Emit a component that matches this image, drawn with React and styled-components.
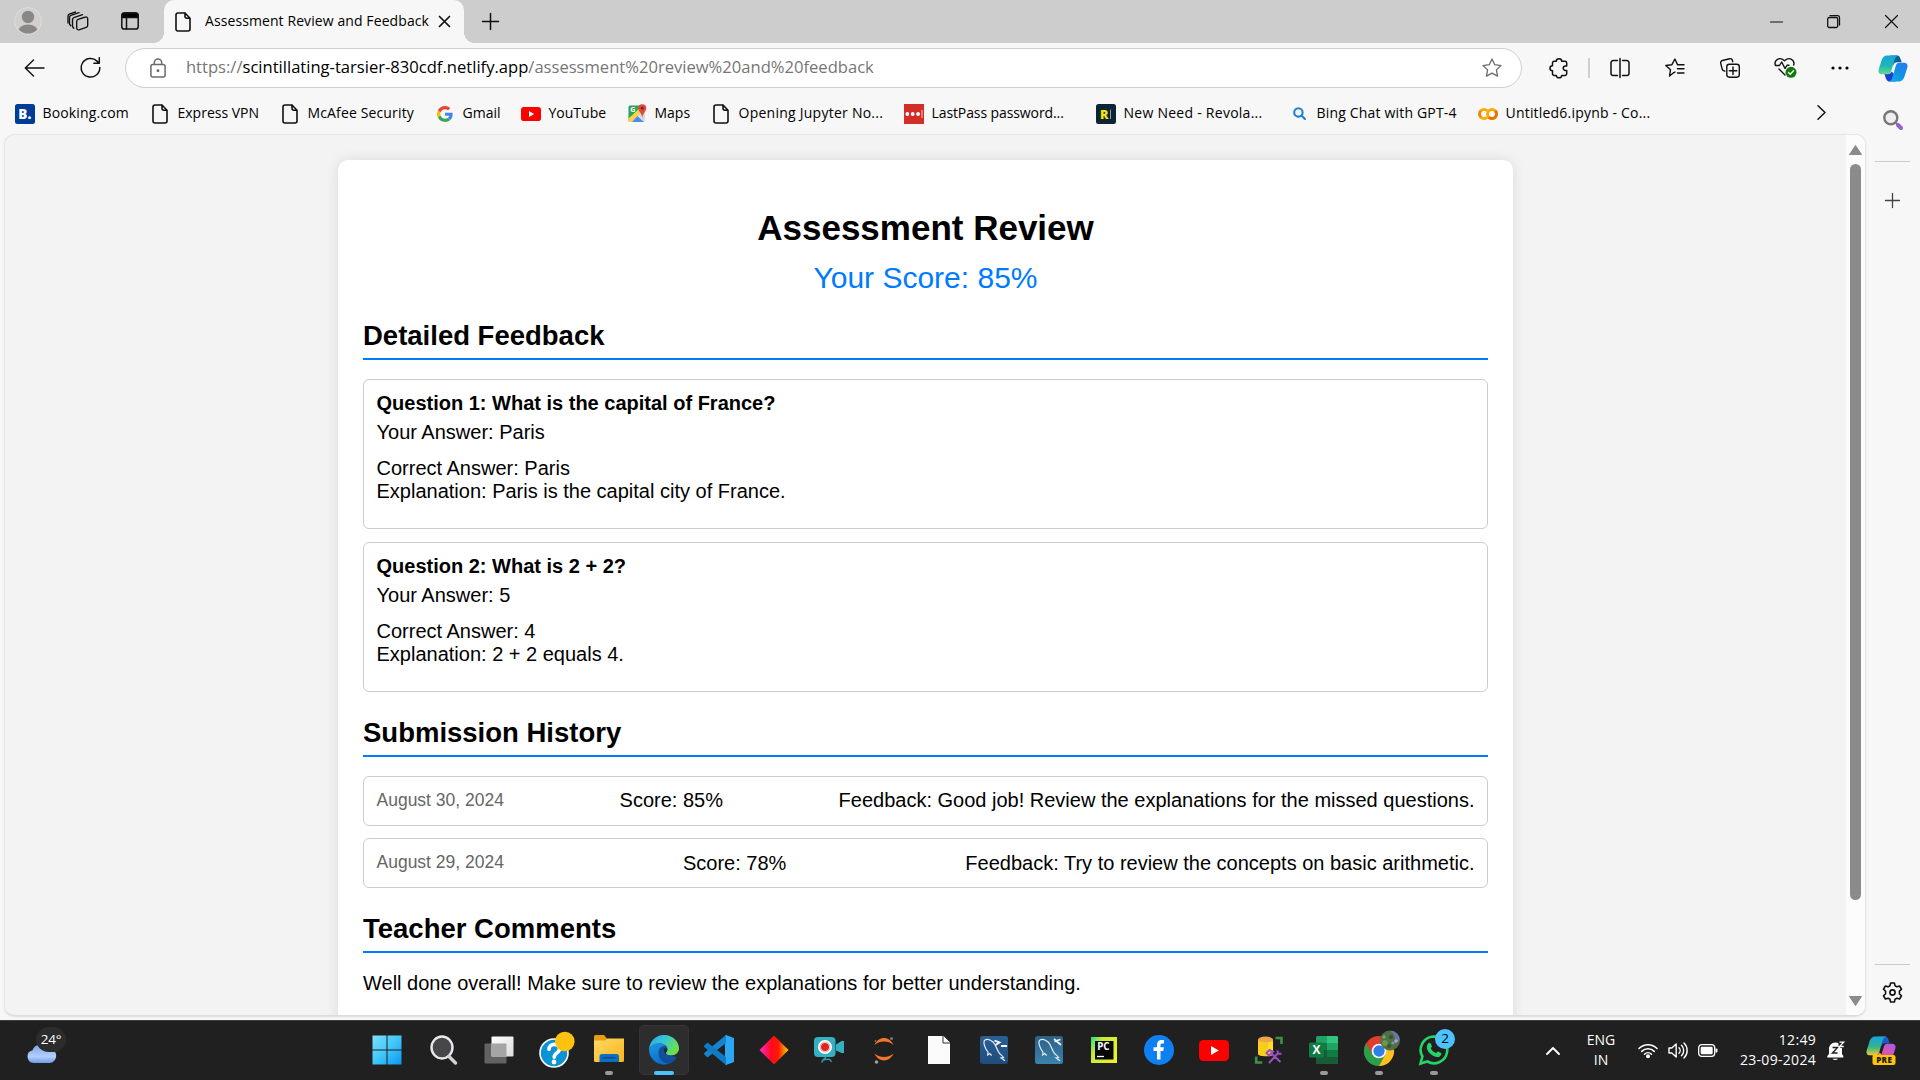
import React from "react";
import styled, { createGlobalStyle, css } from "styled-components";

const ui = `"Open Sans", "Noto Sans", sans-serif`;

const GlobalStyle = createGlobalStyle`
  *, *::before, *::after { box-sizing: border-box; }
  html, body { margin: 0; padding: 0; overflow: hidden; background: #f7f7f7; }
  svg { display: block; flex: none; overflow: visible; }
`;

const Screen = styled.div`
  width: 1920px;
  height: 1080px;
  display: flex;
  flex-direction: column;
  background: #f7f7f7;
  font-family: ${ui};
  color: #000;
  overflow: hidden;
`;

/* ---------- title bar ---------- */
const TitleBar = styled.header`
  height: 43px;
  flex: none;
  display: flex;
  background: #cdcdcd;
`;
const StripActions = styled.div`
  width: 164px;
  display: flex;
  align-items: center;
  padding: 0 0 1px 14px;
  gap: 25px;
`;
const TabSlot = styled.div`
  margin-left: 7px;
`;
const Tab = styled.div`
  position: relative;
  width: 300px;
  height: 43px;
  padding: 0 12px 0 11px;
  display: flex;
  align-items: center;
  background: #f7f7f7;
  border-radius: 10px 10px 0 0;
  &::before, &::after {
    content: "";
    position: absolute;
    bottom: 0;
    width: 10px;
    height: 10px;
  }
  &::before { left: -10px; background: radial-gradient(circle at 0 0, transparent 9.5px, #f7f7f7 10px); }
  &::after { right: -10px; background: radial-gradient(circle at 100% 0, transparent 9.5px, #f7f7f7 10px); }
`;
const TabTitle = styled.span`
  width: 240px;
  padding: 0 0 2px 14px;
  font-size: 14px;
  line-height: 20px;
  letter-spacing: 0.09px;
  white-space: nowrap;
`;
const TabClose = styled.div`
  margin-left: auto;
  padding-right: 2px;
`;
const NewTab = styled.div`
  display: flex;
  align-items: center;
  padding: 0 0 1px 18px;
`;
const WindowControls = styled.div`
  margin-left: auto;
  display: flex;
`;
const WindowButton = styled.div`
  width: 57.5px;
  display: flex;
  align-items: center;
  justify-content: center;
`;

/* ---------- browser body ---------- */
const Body = styled.div`
  flex: 1;
  min-height: 0;
  display: flex;
`;
const Main = styled.div`
  width: 1867px;
  flex: none;
  display: flex;
  flex-direction: column;
`;
const Toolbar = styled.div`
  height: 50px;
  flex: none;
  display: flex;
  align-items: center;
`;
const NavButtons = styled.div`
  width: 125px;
  display: flex;
  align-items: center;
  padding: 0 0 1px 24px;
  gap: 35px;
`;
const AddressBar = styled.div`
  width: 1398px;
  height: 40px;
  display: flex;
  align-items: center;
  padding: 0 19px 0 24px;
  background: #fff;
  border: 1px solid #cfcfcf;
  border-radius: 20px;
`;
const Url = styled.span`
  flex: 1;
  padding: 0 0 2px 20px;
  font-size: 16.58px;
  line-height: 24px;
  color: #767676;
  white-space: nowrap;
  b { font-weight: 400; color: #000; }
`;
const ToolSlot = styled.div`
  width: 55px;
  display: flex;
  align-items: center;
  justify-content: center;
`;
const ToolGroup = styled.div`
  display: flex;
  align-items: center;
  padding-left: 9px;
`;
const Divider = styled.div`
  width: 2px;
  height: 20px;
  margin: 0 2px;
  background: #cfcfcf;
`;
const Bookmarks = styled.nav`
  height: 41px;
  flex: none;
  display: flex;
  align-items: center;
  padding-left: 15px;
`;
const Bookmark = styled.div`
  width: ${(p) => p.$w}px;
  display: flex;
  align-items: center;
  gap: 7.5px;
`;
const BookmarkLabel = styled.span`
  padding-bottom: 2px;
  font-size: 14px;
  line-height: 20px;
  letter-spacing: ${(p) => p.$ls || 0}px;
  white-space: nowrap;
`;
const IconBox = styled.span`
  width: 20px;
  height: 20px;
  flex: none;
  display: flex;
  align-items: center;
  justify-content: center;
`;
const Overflow = styled.div`
  margin-left: auto;
  padding: 0 41px 2px 0;
`;

const Viewport = styled.div`
  width: 1862px;
  height: 882px;
  margin-left: 4px;
  flex: none;
  display: flex;
  overflow: hidden;
  border: 1px solid #e6e6e6;
  border-bottom-color: #dcdcdc;
  border-radius: 10px;
  background: #f3f3f3;
  box-shadow: 0 1px 2px rgba(0, 0, 0, 0.1);
`;
const PageArea = styled.main`
  flex: 1;
  display: flex;
  justify-content: center;
  align-items: flex-start;
  padding-top: 25px;
  font-family: "Liberation Sans", Arial, sans-serif;
`;
const ScrollTrack = styled.div`
  width: 19px;
  display: flex;
  flex-direction: column;
  align-items: center;
  justify-content: space-between;
  padding: 10px 0 9px;
  background: #fcfcfc;
`;
const Thumb = styled.div`
  width: 11px;
  height: 736px;
  margin: 9px 0 auto;
  border-radius: 6px;
  background: #8b8b8b;
`;

/* ---------- assessment page ---------- */
const Card = styled.div`
  width: 1175px;
  height: 960px;
  padding: 25px;
  background: #fff;
  border-radius: 10px;
  box-shadow: 0 0 12.5px rgba(0, 0, 0, 0.1);
  font-size: 20px;
  line-height: 23px;
`;
const PageTitle = styled.h1`
  margin: 23px 0 12.5px;
  font-size: 35px;
  line-height: 40px;
  text-align: center;
`;
const Score = styled.div`
  margin-bottom: 25px;
  font-size: 30px;
  line-height: 34px;
  color: #007bff;
  text-align: center;
`;
const SectionTitle = styled.h2`
  margin: ${(p) => p.$top || 0}px 0 19px;
  padding-bottom: 6.5px;
  font-size: 27.5px;
  line-height: 31.5px;
  border-bottom: 2px solid #007bff;
`;
const boxed = css`
  padding: 12.5px;
  border: 1px solid #ccc;
  border-radius: 6px;
`;
const QuestionBox = styled.article`
  ${boxed}
  height: 150px;
  margin-bottom: 13px;
`;
const Question = styled.div`
  font-weight: 700;
  margin-bottom: 6px;
`;
const Answer = styled.div`
  margin-bottom: 12.5px;
`;
const Submission = styled.div`
  ${boxed}
  height: 50px;
  margin-bottom: 12.5px;
  display: flex;
  justify-content: space-between;
`;
const When = styled.span`
  padding-top: 0.6px;
  font-size: 17.5px;
  line-height: 20px;
  color: #666;
`;
const Comment = styled.p`
  margin: 0;
`;

/* ---------- side bar ---------- */
const Sidebar = styled.aside`
  width: 53px;
  display: flex;
  flex-direction: column;
  align-items: center;
  padding: 12px 2px 0 0;
`;
const SideRule = styled.div`
  width: 35px;
  height: 1px;
  background: #cbcbcb;
  margin: ${(p) => p.$m};
`;
const SideGap = styled.div`
  height: ${(p) => p.$h}px;
  flex: none;
`;

/* ---------- task bar ---------- */
const Taskbar = styled.footer`
  height: 60px;
  flex: none;
  display: flex;
  align-items: stretch;
  background: #202020;
  border-top: 1px solid #3c403e;
  color: #fff;
`;
const Weather = styled.div`
  position: relative;
  width: 361.5px;
  padding: 23px 0 0 27px;
`;
const Temperature = styled.span`
  position: absolute;
  left: 36px;
  top: 6px;
  width: 30px;
  height: 25px;
  border-radius: 13px;
  background: #2c2c2c;
  font-size: 13.5px;
  line-height: 24px;
  letter-spacing: -0.2px;
  text-align: center;
`;
const Apps = styled.div`
  display: flex;
  align-items: center;
`;
const AppSlot = styled.div`
  position: relative;
  width: 55px;
  height: 60px;
  display: flex;
  align-items: center;
  justify-content: center;
  padding-bottom: 1px;
`;
const ActivePlate = styled.div`
  width: 50px;
  height: 50px;
  display: flex;
  align-items: center;
  justify-content: center;
  border-radius: 5px;
  border: 1px solid #353535;
  background: #2d2d2d;
`;
const Indicator = styled.span`
  position: absolute;
  bottom: 6px;
  left: 50%;
  width: ${(p) => (p.$active ? 20 : 8)}px;
  height: 4px;
  margin-left: ${(p) => (p.$active ? -10 : -4)}px;
  border-radius: 2px;
  background: ${(p) => (p.$active ? "#4cc2ff" : "#9a9a9a")};
`;
const CountBadge = styled.span`
  position: absolute;
  left: 28.5px;
  top: 8px;
  width: 20px;
  height: 20px;
  border-radius: 10px;
  background: #4cc2ff;
  color: #000;
  font-size: 13.5px;
  line-height: 19px;
  text-align: center;
`;
const Tray = styled.div`
  margin-left: auto;
  padding-right: 24px;
  display: flex;
  align-items: center;
  font-size: 14px;
  line-height: 20px;
`;
const Language = styled.div`
  width: 78px;
  padding: 0 0 2px 4px;
  text-align: center;
`;
const Status = styled.div`
  display: flex;
  align-items: center;
  gap: 10px;
`;
const Clock = styled.div`
  width: 98px;
  padding-bottom: 2px;
  text-align: right;
  white-space: nowrap;
  letter-spacing: 0.3px;
`;
const TrayIcon = styled.div`
  margin-left: ${(p) => p.$ml}px;
`;

/* ---------- icons ---------- */
const Line = ({ w = 20, h = w, vb, sw = 1.3, c = "#111", children }) => (
  <svg width={w} height={h} viewBox={vb || `0 0 ${w} ${h}`} fill="none" stroke={c} strokeWidth={sw} strokeLinecap="round" strokeLinejoin="round">
    {children}
  </svg>
);
const Art = ({ w = 32, h = w, vb, children }) => (
  <svg width={w} height={h} viewBox={vb || `0 0 ${w} ${h}`}>{children}</svg>
);

const DocIcon = () => (
  <Line w={16} h={20} sw={1.6}>
    <path d="M10 1H3a2 2 0 0 0-2 2v14a2 2 0 0 0 2 2h10a2 2 0 0 0 2-2V6.2L10 1v3.6a1.6 1.6 0 0 0 1.6 1.6H15" />
  </Line>
);
const Avatar = () => (
  <Art w={28}>
    <defs><clipPath id="av"><circle cx="14" cy="14" r="12.6" /></clipPath></defs>
    <circle cx="14" cy="14" r="13.4" fill="#d2d0ce" stroke="#dfdddb" strokeWidth="1" />
    <g clipPath="url(#av)" fill="#8a8886"><circle cx="14" cy="10" r="6.2" /><ellipse cx="14" cy="25" rx="10.3" ry="7.4" /></g>
  </Art>
);
const Workspaces = () => (
  <Line w={22} h={20} sw={1.35}>
    <path d="M11.200 8.300 18.300 6a1.800 1.800 0 0 1 2.400 1.700v6.600a2.200 2.200 0 0 1-1.500 2.100l-7.100 2.400a1.800 1.800 0 0 1-2.400-1.700v-6.700a2.200 2.200 0 0 1 1.500-2.100z" />
    <path d="M6.800 17.200 6 16.300a2 2 0 0 1-.5-1.300V8.600a2 2 0 0 1 1.400-1.900L15.500 3.700M3.800 14.700l-.8-.9a2 2 0 0 1-.5-1.300V6.200a2 2 0 0 1 1.400-1.900L12 1.700" />
    <path d="M1 12V5a2 2 0 0 1 1.300-1.800L8.500 1" />
  </Line>
);
const TabActions = () => (
  <Line w={18} sw={1.5}>
    <rect x=".8" y="1" width="16.400" height="16" rx="2.600" />
    <path d="M1 3.500A2.500 2.500 0 0 1 3.500 1h11A2.500 2.500 0 0 1 17 3.500v2H1z" fill="#000" />
    <path d="M5.500 5v12" />
  </Line>
);
const Cross = ({ s, sw }) => <Line w={s} sw={sw}><path d={`M.5 .5 ${s - 0.5} ${s - 0.5}M${s - 0.5} .5 .5 ${s - 0.5}`} /></Line>;
const Plus = ({ s, c, sw = 1.4 }) => <Line w={s} c={c} sw={sw}><path d={`M${s / 2} .5V${s - 0.5}M.5 ${s / 2}H${s - 0.5}`} /></Line>;
const Back = () => <Line w={21} h={18} sw={1.4}><path d="M20 9H1.500M9.500 1 1.300 9l8.200 8" /></Line>;
const Refresh = () => <Line w={21} sw={1.5}><path d="M19.800 10.500A9.300 9.300 0 1 1 17 4.100l2 2M19.300.800v5.400h-5.400" /></Line>;
const Lock = () => (
  <Line w={16} h={20} c="#6b6b6b" sw={1.5}>
    <rect x=".9" y="6.500" width="14.200" height="12.500" rx="2" /><path d="M4.300 6.500V4.600a3.700 3.700 0 0 1 7.400 0v1.900" /><circle cx="8" cy="12.800" r=".7" fill="#6b6b6b" />
  </Line>
);
const Star = () => <Line w={20} c="#6b6b6b" sw={1.3}><path d="m10 1 2.750 5.700 6.250.85-4.560 4.350 1.120 6.200L10 15.100l-5.560 3 1.120-6.200L1 7.550l6.250-.85z" /></Line>;
const Puzzle = () => (
  <Line w={20} sw={1.5}>
    <path d="M7.300 3.200a2.700 2.400 0 0 1 5.400 0H16a1.700 1.700 0 0 1 1.700 1.700v3h-1.200a2.300 2.300 0 0 0 0 4.600h1.200v3.200a1.700 1.700 0 0 1-1.700 1.700h-3.300a2.700 2.400 0 0 1-5.400 0H5.200a1.700 1.700 0 0 1-1.700-1.700v-3a2.500 2.500 0 0 1 0-5V4.900a1.700 1.700 0 0 1 1.700-1.700z" />
  </Line>
);
const Split = () => <Line w={20} sw={1.5}><path d="M7.500 2.500H3.300A2.300 2.300 0 0 0 1 4.800v10.400a2.300 2.300 0 0 0 2.300 2.300h4.200M12.500 2.500h4.200A2.300 2.300 0 0 1 19 4.800v10.400a2.300 2.300 0 0 1-2.300 2.300h-4.200M10 .5v19" /></Line>;
const Favorites = () => <Line w={20} sw={1.4}><path d="M8.600 14.800 4.500 18l1-6.300L.8 7.500l6.100-.8L9.900 1l2.700 5.700M12.500 6.800H19M12.500 10.800H19M12.500 15H19M8.600 14.800l1.400-.8" /></Line>;
const Collections = () => (
  <Line w={20} sw={1.4}>
    <rect x="6.800" y="6.200" width="12.500" height="13" rx="2.600" /><path d="M13 9v7.500M9.300 12.700h7.500M4.800 13.200 3.500 12.700a2 2 0 0 1-1.300-1.500L.7 5.300A2.300 2.300 0 0 1 2.400 2.500L9.600.7a2.300 2.300 0 0 1 2.800 1.700l.3 1.300" />
  </Line>
);
const Heart = () => (
  <Line w={22} sw={1.4}>
    <path d="M1.300 8C-.2 3.200 5.500-.8 10.500 3.700c5-4.500 10.700-.5 9.200 4.300M5 12l6 6M1.500 8.500h4l2.200-3.500 3.300 6.500 2-3.200h2" />
    <circle cx="17" cy="15.300" r="5.500" fill="#0f7b0f" stroke="none" /><path d="m14.500 15.500 1.700 1.700 3.300-3.400" stroke="#fff" />
  </Line>
);
const Dots = () => <Art w={18} h={4}><circle cx="2" cy="2" r="1.600" /><circle cx="9" cy="2" r="1.600" /><circle cx="16" cy="2" r="1.600" /></Art>;
const Copilot = ({ pre }) => {
  const k = pre ? "cp" : "cb";
  return (
    <Art w={30} h={pre ? 30 : 27} vb={pre ? "0 0 30 30" : "0 0 30 27"}>
      <defs>
        <linearGradient id={`${k}1`} x1="0" y1="0" x2="0" y2="1"><stop offset="0" stopColor="#16a5dc" /><stop offset=".55" stopColor={pre ? "#2fb589" : "#1cb8b5"} /><stop offset="1" stopColor={pre ? "#f3cb3a" : "#69d88a"} /></linearGradient>
        <linearGradient id={`${k}2`} x1="0" y1="1" x2="1" y2="0"><stop offset="0" stopColor={pre ? "#f6605a" : "#09b5e8"} /><stop offset=".5" stopColor={pre ? "#d955b4" : "#1191e6"} /><stop offset="1" stopColor={pre ? "#a45bea" : "#2b78f0"} /></linearGradient>
      </defs>
      <path d="M12 .5h6.500c3 0 3.600 2 4.400 4.500l.8 2.200H19c-2 0-3 1-3.600 3z" fill={pre ? "#2059c9" : "#0d5f92"} />
      <path d="M18 26.500h-6c-3 0-3.800-2-4.600-4.500L6.500 19H10c2 0 3-1 3.600-2.500L17 20z" fill={pre ? "#f5a12c" : "#1b3fd6"} />
      <path d="M19 .5H9.300C5.800.5 4.300 3 3.200 6.500L.8 14c-1 3.200.3 5.300 3.200 5.300h5.800c1.800 0 2.800-1 3.400-3L16.500 5c.5-2 1.500-4 4-4.300z" fill={`url(#${k}1)`} />
      <path d="M11.500 26.500h9.200c3.500 0 5-2.500 6.100-6l2.400-7.500c1-3.200-.3-5.300-3.200-5.300h-4.800c-1.800 0-2.800 1-3.400 3L14.500 22c-.5 2-1.200 4-4 4.400z" fill={`url(#${k}2)`} />
      {pre && <><rect x="6.500" y="19" width="23" height="10" rx="2.200" fill="#ffc60a" /><text x="18.200" y="26.900" fontFamily="Open Sans" fontSize="8" fontWeight="800" textAnchor="middle" letterSpacing=".4" fill="#1b1b1b">PRE</text></>}
    </Art>
  );
};
const SideSearch = () => (
  <Line w={20} c="#777" sw={2.4}><circle cx="7.800" cy="7.800" r="6.500" fill="#f0eef0" /><path d="m12.800 12.800 2 2" strokeWidth="2" /><path d="m15 15 3 3" stroke="#9560cc" strokeWidth="4" /></Line>
);
const Gear = () => (
  <Line w={21} sw={1.6}>
    <path d="M8.600 1h3.800l.6 2.700 2 1.150 2.600-.85 1.900 3.250-2.050 1.850v2.800l2.050 1.850-1.900 3.250-2.600-.85-2 1.150-.6 2.700H8.600L8 17.300l-2-1.150-2.600.85-1.900-3.250L3.550 11.900V9.100L1.500 7.250 3.400 4l2.600.85L8 3.700z" /><circle cx="10.500" cy="10.500" r="2.600" />
  </Line>
);

/* bookmark icons */
const Booking = () => <Art w={20}><rect width="20" height="20" rx="2.500" fill="#003b95" /><text x="9.800" y="15" fontFamily="Open Sans" fontSize="13.500" fontWeight="800" fill="#fff" textAnchor="middle">B.</text></Art>;
const Google = () => (
  <Art w={16} vb="0 0 48 48">
    <path fill="#EA4335" d="M24 9.500c3.540 0 6.710 1.220 9.210 3.600l6.850-6.850C35.900 2.380 30.470 0 24 0 14.620 0 6.510 5.380 2.560 13.220l7.980 6.190C12.430 13.720 17.740 9.500 24 9.500z" />
    <path fill="#4285F4" d="M46.980 24.550c0-1.570-.15-3.090-.38-4.550H24v9.020h12.940c-.58 2.960-2.260 5.480-4.780 7.180l7.730 6c4.510-4.180 7.090-10.360 7.090-17.650z" />
    <path fill="#FBBC05" d="M10.530 28.590c-.48-1.450-.76-2.990-.76-4.590s.27-3.140.76-4.590l-7.980-6.190C.92 16.460 0 20.120 0 24c0 3.880.92 7.540 2.560 10.780l7.970-6.190z" />
    <path fill="#34A853" d="M24 48c6.480 0 11.930-2.130 15.890-5.810l-7.730-6c-2.150 1.450-4.920 2.300-8.160 2.300-6.260 0-11.570-4.220-13.470-9.910l-7.980 6.190C6.510 42.620 14.620 48 24 48z" />
  </Art>
);
const YouTube = ({ w = 20, h = 14 }) => <Art w={w} h={h} vb="0 0 20 14"><rect width="20" height="14" rx="2.800" fill="#f00" /><path d="m8 4 5.200 3L8 10z" fill="#fff" /></Art>;
const Maps = () => (
  <Art w={19}>
    <defs><clipPath id="mp"><rect x=".5" y="1.500" width="16.500" height="16.500" rx="1.500" /></clipPath></defs>
    <g clipPath="url(#mp)"><rect width="19" height="19" fill="#e8e6e0" /><path d="M0 0h17L0 18z" fill="#2da35a" /><path d="M0 15 14 2l3 3L4 18H0z" fill="#fbd14b" /><path d="M3 19 9.500 12 17 19z" fill="#4a8cf5" /><path d="m10 11 7-6v13z" fill="#d8d8d6" /></g>
    <text x="4.800" y="8" fontSize="7" fontWeight="700" fontFamily="Open Sans" textAnchor="middle" fill="#fff">G</text>
    <path d="M14.300.2a4 4 0 0 1 4 4c0 3-3.200 4.600-4 9-.8-4.400-4-6-4-9a4 4 0 0 1 4-4z" fill="#dd4b3e" /><circle cx="14.300" cy="4.200" r="1.400" fill="#7a2019" />
  </Art>
);
const LastPass = () => <Art w={20}><rect width="20" height="20" fill="#d32d27" /><circle cx="3.300" cy="10" r="1.900" fill="#fff" /><circle cx="8.700" cy="10" r="1.900" fill="#fff" /><circle cx="14.100" cy="10" r="1.900" fill="#fff" /><path d="M18 6v8" stroke="#f6c7c5" strokeWidth="1" /></Art>;
const Revolancer = () => <Art w={20}><rect width="20" height="20" rx="2.500" fill="#0d2436" /><text x="8.300" y="14.800" fontFamily="Open Sans" fontWeight="800" fontSize="12.500" textAnchor="middle" fill="#f6e405">R</text><path d="M14.500 5.500v9.500" stroke="#8f9ba5" strokeWidth="1" /></Art>;
const BingSearch = () => <Line w={13} c="#1f7fd0" sw={2.1}><circle cx="5.400" cy="5.400" r="4.200" /><path d="m8.700 8.700 3.300 3.300" /></Line>;
const Colab = () => (
  <Art w={20} h={12}>
    <circle cx="14" cy="6" r="4.500" fill="none" stroke="#f9ab00" strokeWidth="2.900" /><path d="M10.800 9.200A4.500 4.500 0 0 0 17.200 2.800" fill="none" stroke="#e8710a" strokeWidth="2.900" />
    <path d="M9.200 2.800A4.500 4.500 0 1 0 9.200 9.200" fill="none" stroke="#f9ab00" strokeWidth="2.900" /><path d="M2.800 2.800A4.500 4.500 0 0 0 2.800 9.200" fill="none" stroke="#e8710a" strokeWidth="2.900" opacity=".6" />
  </Art>
);

/* task bar icons */
const Cloud = () => (
  <Art w={30} h={19}>
    <defs><linearGradient id="cl" x1="0" y1="0" x2="0" y2="1"><stop offset="0" stopColor="#7ea4ea" /><stop offset=".65" stopColor="#b4cdfb" /><stop offset="1" stopColor="#6f9ce8" /></linearGradient></defs>
    <path d="M20 3h7v7z" fill="#f0730f" /><path d="M6.500 19a6.500 6.500 0 0 1-1-12.800A8.500 8.500 0 0 1 20 3.500l2.500 1A7.300 7.300 0 0 1 23 19z" fill="url(#cl)" />
  </Art>
);
const Windows = () => (
  <Art w={32} h={30} vb="1 0 32 30">
    <defs><linearGradient id="wn" gradientUnits="userSpaceOnUse" x1="0" y1="0" x2="30" y2="30"><stop offset="0" stopColor="#82e1fb" /><stop offset=".5" stopColor="#3fc7f8" /><stop offset="1" stopColor="#0a95f4" /></linearGradient></defs>
    <path d="M.5 .5h14v14H.5zM15.500.5h14v14h-14zM.5 15.500h14v14H.5zM15.500 15.500h14v14h-14z" fill="url(#wn)" />
  </Art>
);
const Search = () => <Art w={28} h={30}><ellipse cx="12" cy="12.500" rx="10.500" ry="11" fill="#474747" stroke="#e6e9ee" strokeWidth="2.400" /><path d="m19 21.500 6.500 6.500" stroke="#cfd2d6" strokeWidth="3.400" strokeLinecap="round" /></Art>;
const TaskView = () => (
  <Art w={30} h={28}>
    <defs><linearGradient id="tv" x1="0" y1="0" x2="1" y2="1"><stop offset="0" stopColor="#fff" /><stop offset="1" stopColor="#dcdcdc" /></linearGradient></defs>
    <rect x=".5" y="7.500" width="22" height="20" rx="1" fill="#626262" /><rect x="7.500" y=".5" width="22" height="20" rx="1" fill="url(#tv)" /><path d="M7.500 7.500h15v13h-15z" fill="#a5a5a5" />
  </Art>
);
const Help = () => (
  <Art w={36} h={38} vb="-2 0 36 38">
    <circle cx="16" cy="22" r="14" fill="#0b93d5" stroke="#fff" strokeWidth="1.600" />
    <path d="M11 18.500c0-7 10.500-6.500 10.500-.6 0 4.200-5.300 3.800-5.300 8.300" fill="none" stroke="#fff" strokeWidth="3.600" strokeLinecap="round" /><circle cx="16" cy="31" r="2.400" fill="#fff" />
    <circle cx="26.800" cy="10.500" r="9.800" fill="#ffc20e" />
  </Art>
);
const Folder = () => (
  <Art w={30} h={32} vb="0 -1 30 32">
    <defs><linearGradient id="fo" x1="0" y1="0" x2="1" y2="1"><stop offset="0" stopColor="#ffd96b" /><stop offset="1" stopColor="#fbb416" /></linearGradient></defs>
    <path d="M0 1.500Q0 0 1.500 0H10l3 3.500V8H0z" fill="#e5a00d" /><path d="M0 5.500h11l2.500-2H30V25.500Q30 27 28.500 27h-27Q0 27 0 25.500z" fill="url(#fo)" />
    <path d="M5.500 27v-5.500a2.500 2.500 0 0 1 2.500-2.500h14.500a2.500 2.500 0 0 1 2.500 2.500V27z" fill="#0b6fc4" /><path d="M8.500 22.800h13" stroke="#0a4a8c" strokeWidth="1.400" />
  </Art>
);
const Edge = () => (
  <Art w={30}>
    <defs>
      <linearGradient id="e1" x1="0" y1="0" x2="1" y2=".4"><stop offset="0" stopColor="#2aa9e6" /><stop offset=".5" stopColor="#35c5d8" /><stop offset="1" stopColor="#6be04c" /></linearGradient>
      <linearGradient id="e2" x1="0" y1="0" x2=".5" y2="1"><stop offset="0" stopColor="#1f98df" /><stop offset="1" stopColor="#0a6fc9" /></linearGradient>
    </defs>
    <circle cx="15" cy="15" r="15" fill="#0f4f9c" />
    <path d="M0 14C1 5.500 7.500 0 15 0c9 0 15 6.500 15 13.500 0 4.500-3.500 7-7.500 7-3.500 0-5.700-1.200-5.700-2.300 0-.8 1.700-1.700 1.700-4.200 0-3-3-5.500-8-5.500C5 8.500 1 11.500 0 14z" fill="url(#e1)" />
    <path d="M0 14.500C1 10.500 5 8.300 9.500 8.300c3.500 0 6 1.200 7.500 3-4-1.200-7.500 2.200-7.500 6.700 0 5.500 4 10 10 10.500A15 15 0 0 1 0 14.500z" fill="url(#e2)" />
    <path d="M16.800 18.200c0 1.100 2.200 2.300 5.700 2.300 2.700 0 5-1 6.300-3l.8 3-4.600 4.500c-3 .9-7 .5-9.500-1-2.400-1.600-3.500-4.500-2.700-7.500z" fill="#12509a" /><path d="M17.500 13c1 1 1 2.500.2 3.700-1 1.300-.9 1.500-.7 2.300-2-.8-2.900-3.500-1.700-5.500z" fill="#262b30" /><path d="M22.500 20.500c3.500 0 6-1.500 7-4.500l1.500 1-1.500 6-2 1.300c.5-1.600 0-2.300-1-2.300z" fill="#2d2d2d" />
  </Art>
);
const VSCode = () => <Art w={30}><path d="m22 0 8 3v24l-8 3-1-.5V.5z" fill="#2ba7f5" /><path d="M22 0v8L4.500 21.800c-.6.5-1.300.4-1.800 0L.5 19.800c-.6-.6-.6-1.400 0-2z" fill="#1584cc" /><path d="M22 30v-8L4.500 8.200c-.6-.5-1.300-.4-1.800 0L.5 10.200c-.6.6-.6 1.400 0 2z" fill="#0f7bc4" /></Art>;
const Diamond = () => <Art w={30}><defs><linearGradient id="dm" x1="0" y1="0" x2="1" y2="0"><stop offset="0" stopColor="#ff2bd0" /><stop offset=".4" stopColor="#ff0a1c" /><stop offset=".65" stopColor="#ff1a00" /><stop offset="1" stopColor="#ffd800" /></linearGradient></defs><path d="m15 .5 14.500 14.500L15 29.500.5 15z" fill="url(#dm)" /></Art>;
const Camera = () => (
  <Art w={30}>
    <rect x="0" y="2" width="21.500" height="20" rx="4" fill="#33b1c3" /><path d="m22 9.500 5.500-3.500H30v12h-2.500L22 15.500z" fill="#33b1c3" /><circle cx="11" cy="12" r="7" fill="#fff" /><circle cx="11" cy="12" r="5" fill="none" stroke="#e9a9a9" /><circle cx="11" cy="12" r="4" fill="#e32222" />
    <path d="m12 22-3.500 3.500M7.500 27.500 9 25c3-1 5-.5 6.500-.8l2 2.500" stroke="#2b9baa" strokeWidth="1.500" fill="none" />
  </Art>
);
const Jupyter = () => <Art w={22} h={30}><path d="M1.500 10c4-9.300 15-9.300 19 0-5-4.600-14-4.600-19 0zM1.500 18.500c4 9.300 15 9.300 19 0-5 4.600-14 4.600-19 0z" fill="#f37726" /><circle cx="2.500" cy="6" r="1" fill="#6d6e71" /><circle cx="18.500" cy="3.500" r="1.500" fill="#777" /><circle cx="3.500" cy="27" r="1.800" fill="#9e9e9e" /></Art>;
const FilePage = () => <Art w={22} h={28}><path d="M0 0h15.500L22 6.500V28H0z" fill="#fbfbfb" /><path d="M15 0v7h7" fill="#fff" stroke="#333" strokeWidth="1" /></Art>;
const MySql = ({ alt }) => (
  <Art w={28}>
    <defs><linearGradient id={alt ? "ms2" : "ms1"} x1="0" y1="0" x2="0" y2="1"><stop offset="0" stopColor={alt ? "#2c5f84" : "#2a5f94"} /><stop offset="1" stopColor={alt ? "#3a83ad" : "#1f4c7c"} /></linearGradient></defs>
    <rect width="28" height="28" rx="2.500" fill={`url(#${alt ? "ms2" : "ms1"})`} />
    <path d="M8 16C4.500 12 2.800 5.500 5 4c3-1.500 8 .5 10 4.500 1.600 3.500 2.500 6 4.500 9 1.500 1.500 3 2.300 4 4l-2.500.3 4 3M8 16l-.3 3 2-1.500 2 2" fill="none" stroke="#e3edf5" strokeWidth="1.200" />
    {alt ? <path d="m19 3 7 6M22 4.500l3.500-1M19.500 5l3 .5" stroke="#e8f1f7" strokeWidth="1.800" fill="none" /> : <path d="m14.500 4.500 5 2-4 2.500M21 10h6" stroke="#fff" strokeWidth="1.800" fill="none" />}
  </Art>
);
const PyCharm = () => (
  <Art w={26}>
    <defs><linearGradient id="pc" x1="0" y1="0" x2="1" y2=".6"><stop offset="0" stopColor="#21e07c" /><stop offset=".35" stopColor="#c9ea3a" /><stop offset="1" stopColor="#e9f02c" /></linearGradient></defs>
    <rect width="26" height="26" fill="url(#pc)" /><rect x="4" y="4" width="18.500" height="18.500" fill="#050805" /><text x="12.400" y="13" fontFamily="Open Sans" fontSize="9.800" fontWeight="700" textAnchor="middle" fill="#fff">PC</text><path d="M6 19.500h7" stroke="#fff" strokeWidth="1.300" />
  </Art>
);
const Facebook = () => <Art w={30}><circle cx="15" cy="15" r="15" fill="#0f80f2" /><path d="M13 24.500V16h-3.500v-3.700H13V10c0-3.500 2-5 4.700-5 1.300 0 2.300.2 2.300.2v3.200h-1.700c-1.400 0-1.800.8-1.800 1.800v2.100h3.400l-.6 3.700h-2.800v8.500z" fill="#fff" /></Art>;
const DbTools = () => (
  <Art w={28}>
    <path d="M3 3.500v14.500c0 3 15 3 15 0V3.500z" fill="#f7cf1b" /><path d="M13 6h5v12c0 1-2.200 1.800-5 2z" fill="#ffe11d" /><ellipse cx="10.500" cy="3.500" rx="7.500" ry="3" fill="#efa650" />
    <path d="M20.500 2h6v6M1.200 20.500v6h6" fill="none" stroke="#3f8f46" strokeWidth="2.600" /><path d="m14 27 9.500-10.500M11.500 17l3-3 3.500 1.500-4 4zM16.500 17.500l9 8.500M22.500 14.500l.5 3 3.500.3" fill="none" stroke="#9a4fc4" strokeWidth="2" />
  </Art>
);
const Excel = () => (
  <Art w={30} h={28}>
    <rect x="7" y="0" width="22" height="28" rx="1.500" fill="#21a366" /><path d="M7 7h11v7H7z" fill="#107c41" /><path d="M7 14h11v7H7z" fill="#185c37" /><path d="M18 0h9.500Q29 0 29 1.500V7H18z" fill="#33c481" /><path d="M18 14h11v7H18z" fill="#107c41" /><path d="M7 21h22v5.500q0 1.500-1.500 1.500h-19Q7 28 7 26.500z" fill="#185c37" />
    <rect x="0" y="6.500" width="15" height="15" rx="1.500" fill="#107c41" /><text x="7.500" y="18.300" fontFamily="Open Sans" fontSize="12" fontWeight="700" textAnchor="middle" fill="#fff">X</text>
  </Art>
);
const Chrome = () => (
  <Art w={38} h={38}>
    <defs><clipPath id="ch"><circle cx="30" cy="9.500" r="10" /></clipPath></defs>
    <circle cx="19" cy="20" r="15" fill="#e33b2e" /><path d="M6 12.500A15 15 0 0 0 19 35l6.500-11.500H12.500z" fill="#27a24a" /><path d="M32 12.500A15 15 0 0 1 19 35l6.500-11.500L23 12.500z" fill="#fcc31c" /><circle cx="19" cy="20" r="7.300" fill="#fff" /><circle cx="19" cy="20" r="5.700" fill="#2f7de9" />
    <g clipPath="url(#ch)"><rect x="19" y="-2" width="22" height="22" fill="#4f7142" /><path d="M30 0c4 2 6 6 5 12l5-3-3-10z" fill="#6f72a8" /><circle cx="25" cy="12" r="3" fill="#6d9550" /><circle cx="31" cy="6" r="2" fill="#34503a" /><circle cx="36" cy="10" r="1.800" fill="#a9a2d9" /><circle cx="29" cy="15" r="2" fill="#3a5733" /><circle cx="24" cy="6" r="1.800" fill="#7c9c66" /><circle cx="33" cy="12" r="1.500" fill="#8b8fc0" /></g>
  </Art>
);
const WhatsApp = () => (
  <Art w={30}>
    <path d="M1.500 28.500 3.400 21.500a13.300 13.300 0 1 1 5 5z" fill="none" stroke="#25d366" strokeWidth="2.600" /><path d="M9 8.500c1-1.200 2.300-1 2.700 0l1.200 2.800c.2.6-1.200 1.700-1 2.200 1 2 2.800 3.700 5 4.600.8.2 1.500-1.800 2.200-1.500l3 1.500c.8.6-.2 3-1.600 3.600-3 1.300-7-.8-9.700-3.500C8 15.500 6.800 11.500 9 8.500z" fill="#25d366" />
  </Art>
);
const Wifi = () => <Line w={20} h={15} c="#fff" sw={1.6}><path d="M1 5.500a12.700 12.700 0 0 1 18 0M3.700 8.400a8.900 8.900 0 0 1 12.600 0M6.500 11.200a5 5 0 0 1 7 0" /><circle cx="10" cy="13.300" r="1.200" fill="#fff" /></Line>;
const Speaker = () => <Line w={20} h={17} c="#fff" sw={1.4}><path d="M1 6v5h2.800l4.400 4V2L3.800 6zM11 5.700a4 4 0 0 1 0 5.600M13.500 3.300a7.300 7.300 0 0 1 0 10.400M16 1a10.500 10.500 0 0 1 0 15" /></Line>;
const Battery = () => <Art w={20} h={13}><rect x=".7" y=".7" width="16" height="11.600" rx="3" fill="none" stroke="#fff" strokeWidth="1.300" /><rect x="2.700" y="2.700" width="12" height="7.600" rx="1.200" fill="#fff" /><path d="M17.500 4.500h1a1 1 0 0 1 1 1v2a1 1 0 0 1-1 1h-1z" fill="#fff" /></Art>;
const Bell = () => (
  <Art w={18} h={20}>
    <path d="M8.500 1.500C4.500 1.500 2 4.500 2 8v5L.3 15v1.500h16V15L15 13V8c0-3.500-2.500-6.500-6.500-6.500zM5.500 17.700a3 2.300 0 0 0 5.500 0z" fill="#fff" />
    <path d="M11.500 0h6v7h-4l-2-2.500z" fill="#202020" />
    <path d="M5.500 6.500h5l-5 5.500h5" fill="none" stroke="#202020" strokeWidth="1.400" /><path d="M12.500 1.200h4.200l-4.200 4.300h4.200" fill="none" stroke="#fff" strokeWidth="1.300" />
  </Art>
);

const bookmarks = [
  { icon: <Booking />, label: "Booking.com", w: 135, ls: 0.15 },
  { icon: <DocIcon />, label: "Express VPN", w: 130 },
  { icon: <DocIcon />, label: "McAfee Security", w: 155, ls: 0.14 },
  { icon: <Google />, label: "Gmail", w: 86 },
  { icon: <YouTube />, label: "YouTube", w: 106 },
  { icon: <Maps />, label: "Maps", w: 84 },
  { icon: <DocIcon />, label: "Opening Jupyter No...", w: 193, ls: 0.25 },
  { icon: <LastPass />, label: "LastPass password...", w: 192, ls: -0.1 },
  { icon: <Revolancer />, label: "New Need - Revola...", w: 193, ls: 0.26 },
  { icon: <BingSearch />, label: "Bing Chat with GPT-4", w: 189, ls: 0.18 },
  { icon: <Colab />, label: "Untitled6.ipynb - Co...", w: 172, ls: 0.2 },
];

const questions = [
  { q: "Question 1: What is the capital of France?", yours: "Paris", correct: "Paris", why: "Paris is the capital city of France." },
  { q: "Question 2: What is 2 + 2?", yours: "5", correct: "4", why: "2 + 2 equals 4." },
];

const history = [
  { date: "August 30, 2024", score: "85%", feedback: "Good job! Review the explanations for the missed questions." },
  { date: "August 29, 2024", score: "78%", feedback: "Try to review the concepts on basic arithmetic." },
];

const apps = [
  { icon: <Windows /> }, { icon: <Search /> }, { icon: <TaskView /> }, { icon: <Help /> },
  { icon: <Folder />, open: true }, { icon: <Edge />, active: true }, { icon: <VSCode /> }, { icon: <Diamond /> },
  { icon: <Camera /> }, { icon: <Jupyter /> }, { icon: <FilePage /> }, { icon: <MySql /> }, { icon: <MySql alt /> },
  { icon: <PyCharm /> }, { icon: <Facebook /> }, { icon: <YouTube w={30} h={21} /> }, { icon: <DbTools /> },
  { icon: <Excel />, open: true }, { icon: <Chrome />, open: true }, { icon: <WhatsApp />, open: true, count: 2 },
];

export default function App() {
  return (
    <Screen>
      <GlobalStyle />
      <TitleBar>
        <StripActions><Avatar /><Workspaces /><TabSlot><TabActions /></TabSlot></StripActions>
        <Tab>
          <DocIcon />
          <TabTitle>Assessment Review and Feedback</TabTitle>
          <TabClose><Cross s={11} sw={1.7} /></TabClose>
        </Tab>
        <NewTab><Plus s={17} sw={1.5} /></NewTab>
        <WindowControls>
          <WindowButton><Line w={13} h={2} sw={1.2}><path d="M.5 1h12" /></Line></WindowButton>
          <WindowButton><Line w={13} sw={1.3}><rect x=".7" y="2.500" width="10" height="10" rx="1.500" /><path d="M3 .7h7.500a2 2 0 0 1 2 2V10" /></Line></WindowButton>
          <WindowButton><Cross s={13} sw={1.2} /></WindowButton>
        </WindowControls>
      </TitleBar>

      <Body>
        <Main>
          <Toolbar>
            <NavButtons><Back /><Refresh /></NavButtons>
            <AddressBar>
              <Lock />
              <Url>https://<b>scintillating-tarsier-830cdf.netlify.app</b>/assessment%20review%20and%20feedback</Url>
              <Star />
            </AddressBar>
            <ToolGroup>
              <ToolSlot><Puzzle /></ToolSlot>
              <Divider />
              <ToolSlot><Split /></ToolSlot>
              <ToolSlot><Favorites /></ToolSlot>
              <ToolSlot><Collections /></ToolSlot>
              <ToolSlot><Heart /></ToolSlot>
              <ToolSlot><Dots /></ToolSlot>
            </ToolGroup>
          </Toolbar>
          <Bookmarks>
            {bookmarks.map((b) => (
              <Bookmark key={b.label} $w={b.w}>
                <IconBox>{b.icon}</IconBox>
                <BookmarkLabel $ls={b.ls}>{b.label}</BookmarkLabel>
              </Bookmark>
            ))}
            <Overflow><Line w={9} h={15} sw={1.5}><path d="m1 .8 7 6.700-7 6.700" /></Line></Overflow>
          </Bookmarks>
          <Viewport>
            <PageArea>
              <Card>
                <PageTitle>Assessment Review</PageTitle>
                <Score>Your Score: 85%</Score>
                <SectionTitle>Detailed Feedback</SectionTitle>
                {questions.map((x) => (
                  <QuestionBox key={x.q}>
                    <Question>{x.q}</Question>
                    <Answer>Your Answer: {x.yours}</Answer>
                    <div>Correct Answer: {x.correct}</div>
                    <div>Explanation: {x.why}</div>
                  </QuestionBox>
                ))}
                <SectionTitle $top={25}>Submission History</SectionTitle>
                {history.map((x) => (
                  <Submission key={x.date}>
                    <When>{x.date}</When>
                    <span>Score: {x.score}</span>
                    <span>Feedback: {x.feedback}</span>
                  </Submission>
                ))}
                <SectionTitle $top={25}>Teacher Comments</SectionTitle>
                <Comment>Well done overall! Make sure to review the explanations for better understanding.</Comment>
              </Card>
            </PageArea>
            <ScrollTrack>
              <Art w={13} h={10}><path d="M6.500.5 12.500 9.500H.5z" fill="#8b8b8b" stroke="#8b8b8b" strokeLinejoin="round" /></Art>
              <Thumb />
              <Art w={13} h={10}><path d="M6.500 9.500 12.500.5H.5z" fill="#8b8b8b" stroke="#8b8b8b" strokeLinejoin="round" /></Art>
            </ScrollTrack>
          </Viewport>
        </Main>
        <Sidebar>
          <Copilot />
          <SideGap $h={28} />
          <SideSearch />
          <SideRule $m="31px 0" />
          <Plus s={15} c="#444" sw={1.3} />
          <SideRule $m="auto 0 17px" />
          <Gear />
          <SideGap $h={17} />
        </Sidebar>
      </Body>

      <Taskbar>
        <Weather><Cloud /><Temperature>24°</Temperature></Weather>
        <Apps>
          {apps.map((a, i) => (
            <AppSlot key={i}>
              {a.active ? <ActivePlate>{a.icon}</ActivePlate> : a.icon}
              {(a.open || a.active) && <Indicator $active={a.active} />}
              {a.count && <CountBadge>{a.count}</CountBadge>}
            </AppSlot>
          ))}
        </Apps>
        <Tray>
          <Line w={14} h={8} c="#fff" sw={1.9}><path d="m1 7 6-6 6 6" /></Line>
          <Language>ENG<br />IN</Language>
          <Status><Wifi /><Speaker /><Battery /></Status>
          <Clock>12:49<br />23-09-2024</Clock>
          <TrayIcon $ml={11}><Bell /></TrayIcon>
          <TrayIcon $ml={21}><Copilot pre /></TrayIcon>
        </Tray>
      </Taskbar>
    </Screen>
  );
}
